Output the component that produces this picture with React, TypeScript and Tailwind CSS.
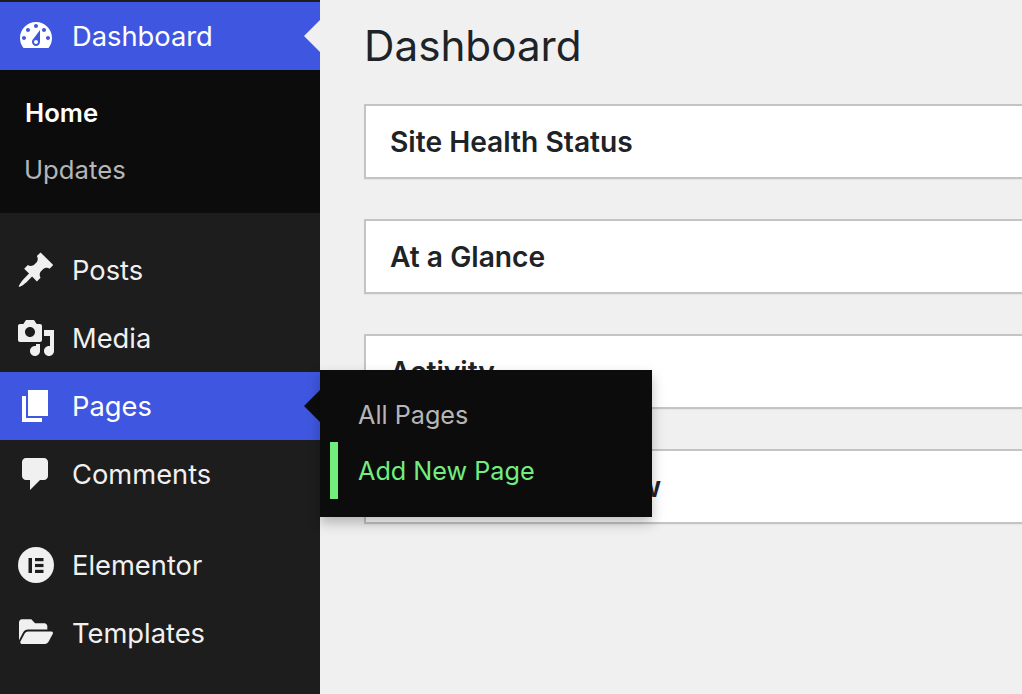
import React from "react";
import { FaFolderOpen } from "react-icons/fa";

const paths: Record<string, string> = {
  dashboard:
    "M3.76 16h12.48c1.1-1.37 1.76-3.11 1.76-5 0-4.42-3.58-8-8-8s-8 3.58-8 8c0 1.89.66 3.63 1.76 5zM10 4c.55 0 1 .45 1 1s-.45 1-1 1-1-.45-1-1 .45-1 1-1zM6 6c.55 0 1 .45 1 1s-.45 1-1 1-1-.45-1-1 .45-1 1-1zm8 0c.55 0 1 .45 1 1s-.45 1-1 1-1-.45-1-1 .45-1 1-1zm-5.37 5.55L12 7v6c0 1.1-.9 2-2 2s-2-.9-2-2c0-.57.24-1.08.63-1.45zM4 10c.55 0 1 .45 1 1s-.45 1-1 1-1-.45-1-1 .45-1 1-1zm12 0c.55 0 1 .45 1 1s-.45 1-1 1-1-.45-1-1 .45-1 1-1zm-5 3c0-.55-.45-1-1-1s-1 .45-1 1 .45 1 1 1 1-.45 1-1z",
  posts:
    "M10.44 3.02l1.82-1.82 6.36 6.35-1.83 1.82c-1.05-.68-2.48-.57-3.41.36l-.75.75c-.92.93-1.04 2.35-.35 3.41l-1.83 1.82-2.41-2.41-2.8 2.79c-.42.42-3.38 2.71-3.8 2.29s1.86-3.39 2.28-3.81l2.79-2.79L4.1 9.36l1.83-1.82c1.05.69 2.48.57 3.4-.36l.75-.75c.93-.92 1.05-2.35.36-3.41z",
  media:
    "M13 11V4c0-.55-.45-1-1-1h-1.67L9 1H5L3.67 3H2c-.55 0-1 .45-1 1v7c0 .55.45 1 1 1h10c.55 0 1-.45 1-1zM7 4.5c1.38 0 2.5 1.12 2.5 2.5S8.38 9.5 7 9.5 4.5 8.38 4.5 7 5.62 4.5 7 4.5zM14 6h5v10.5c0 1.38-1.12 2.5-2.5 2.5S14 17.88 14 16.5s1.12-2.5 2.5-2.5c.17 0 .34.02.5.05V9h-3V6zm-4 8.05V13h2v3.5c0 1.38-1.12 2.5-2.5 2.5S7 17.88 7 16.5 8.12 14 9.5 14c.17 0 .34.02.5.05z",
  pages: "M6 15V2h10v13H6zm-1 1h8v2H3V5h2v11z",
  comments:
    "M5 2h9c1.1 0 2 .9 2 2v7c0 1.1-.9 2-2 2h-2l-5 5v-5H5c-1.1 0-2-.9-2-2V4c0-1.1.9-2 2-2z",
};

function Dash({ name, white }: { name: string; white?: boolean }) {
  return (
    <svg viewBox="0 0 20 20" className={`w-10 h-10 ${white ? "text-white" : "text-[#f0f0f1]"}`} fill="currentColor">
      <path fillRule="evenodd" d={paths[name]} />
    </svg>
  );
}

function ElementorIcon() {
  return (
    <svg viewBox="0 0 36 36" className="w-9 h-9">
      <circle cx="18" cy="18" r="18" fill="#f0f0f1" />
      <rect x="10.5" y="11" width="3.5" height="15" fill="#1d1d1d" />
      <rect x="17" y="11" width="8.5" height="3.2" fill="#1d1d1d" />
      <rect x="17" y="16.9" width="8.5" height="3.2" fill="#1d1d1d" />
      <rect x="17" y="22.8" width="8.5" height="3.2" fill="#1d1d1d" />
    </svg>
  );
}

function Row({
  icon,
  label,
  active,
  arrow,
  children,
}: {
  icon: React.ReactNode;
  label: string;
  active?: boolean;
  arrow?: string;
  children?: React.ReactNode;
}) {
  return (
    <div className={`relative flex h-[68px] items-center pl-4 ${active ? "bg-[#3f57e0] text-white" : "text-[#f0f0f1]"}`}>
      <div className="flex h-10 w-10 items-center justify-center">{icon}</div>
      <span className="ml-4 pt-0.5 text-[27.3px] leading-none">{label}</span>
      {arrow && (
        <div className={`absolute right-0 top-1/2 h-0 w-0 -translate-y-1/2 border-y-[16px] border-r-[16px] border-y-transparent ${arrow}`} />
      )}
      {children}
    </div>
  );
}

function Card({ title, tight }: { title: string; tight?: boolean }) {
  return (
    <div className="flex h-[75px] w-[800px] shrink-0 items-center border-2 border-[#c3c4c7] bg-white pl-6 shadow-[0_1px_1px_rgba(0,0,0,0.04)]">
      <h2 className={`pt-0.5 text-[28.2px] font-semibold leading-none text-[#1d2327] ${tight ? "tracking-[-0.25px]" : ""}`}>{title}</h2>
    </div>
  );
}

export default function App() {
  return (
    <div className="flex h-[694px] w-[1022px] overflow-hidden bg-[#f0f0f1] font-['Inter',sans-serif]">
      <aside className="z-10 flex w-[320px] shrink-0 flex-col bg-[#1d1d1d] pt-0.5">
        <Row icon={<Dash name="dashboard" white />} label="Dashboard" active arrow="border-r-[#f0f0f1]" />
        <div className="flex h-[143px] flex-col justify-center gap-[27px] bg-[#0c0c0c] pb-[1px] pl-6 text-[25.7px] leading-[30px]">
          <span className="ml-px font-semibold text-white">Home</span>
          <span className="text-[#b5b6b7]">Updates</span>
        </div>
        <div className="h-[23px]" />
        <Row icon={<Dash name="posts" />} label="Posts" />
        <Row icon={<Dash name="media" />} label="Media" />
        <Row icon={<Dash name="pages" white />} label="Pages" active arrow="border-r-[#0c0c0c]">
          <div className="absolute left-[320px] top-[-2px] flex h-[147px] w-[332px] flex-col bg-[#0c0c0c] pt-[15px] text-[25.2px] leading-[30px] shadow-[0_6px_12px_rgba(0,0,0,0.25)]">
            <div className="flex h-[57px] items-center pl-[38px] pt-0.5 text-[#b5b6b7]">All Pages</div>
            <div className="ml-[10px] flex h-[57px] items-center border-l-[8px] border-[#72ee7e] pl-5 text-[#72ee7e]">Add New Page</div>
          </div>
        </Row>
        <Row icon={<Dash name="comments" />} label="Comments" />
        <div className="h-[23px]" />
        <Row icon={<ElementorIcon />} label="Elementor" />
        <Row icon={<FaFolderOpen preserveAspectRatio="none" className="-mt-1 h-[33px] w-[34px]" />} label="Templates" />
      </aside>
      <main className="flex min-w-0 flex-1 flex-col pl-11">
        <h1 className="flex h-[104px] shrink-0 items-start pt-[23px] text-[42.2px] font-normal leading-[46px] text-[#1d2327]">Dashboard</h1>
        <div className="flex flex-col gap-10">
          <Card title="Site Health Status" />
          <Card title="At a Glance" />
          <Card title="Activity" />
          <Card title="Elementor Overview" tight />
        </div>
      </main>
    </div>
  );
}
